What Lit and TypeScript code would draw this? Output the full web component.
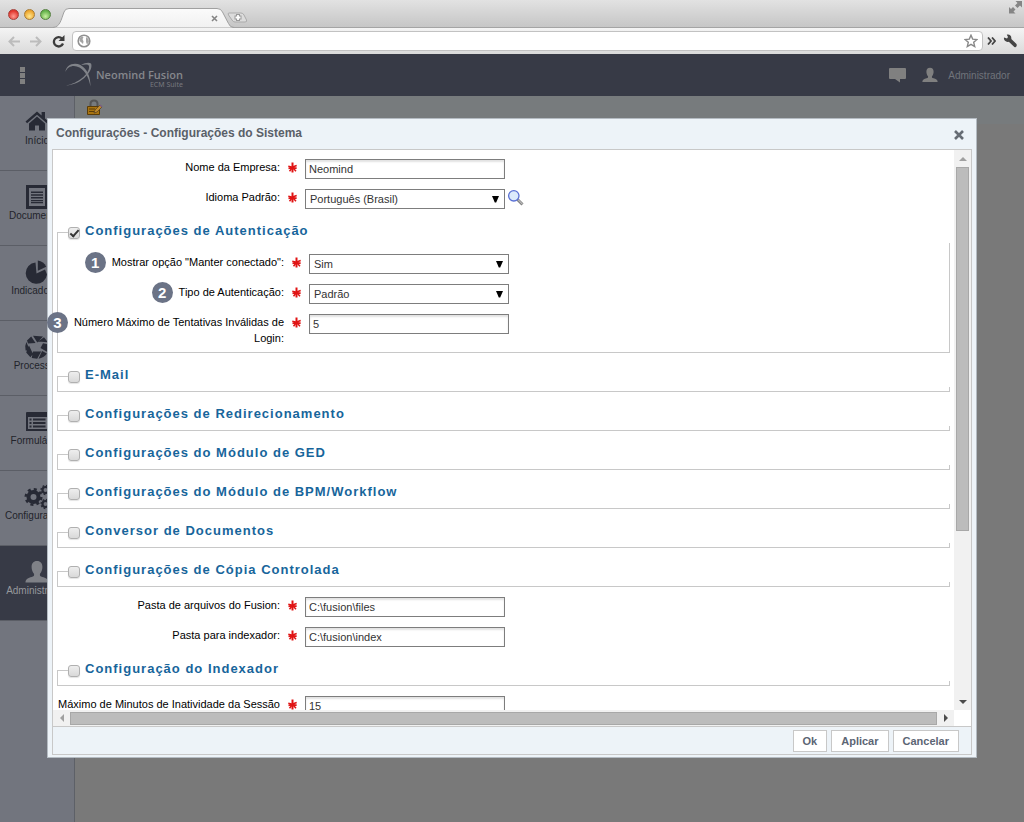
import { LitElement, html, css, svg, nothing } from "lit";
import { customElement, property, state } from "lit/decorators.js";
import { classMap } from "lit/directives/class-map.js";

const house = svg`<path d="M12 1.5 0.5 11.5l1.6 1.8L12 4.8l9.9 8.5 1.6-1.8-3.5-3V2h-3.4v3.5z"/><path d="M12 6.6 4 13.4V20.5h6v-5h4v5h6v-7.1z"/>`;
const documentIcon = svg`<path fill-rule="evenodd" d="M1 0h22v24H1zM4 3v18h16V3z"/><path d="M6 6.5h12v1.4H6zM6 9.3h12v1.4H6zM6 12.1h12v1.4H6zM6 14.9h12v1.4H6zM6 17h12v1.2H6z"/>`;
const pie = svg`<path d="M10.500 2.500A10.700 10.700 0 1 0 22 14.500L20 9.500 11.500 13.500z"/><path d="M12.800 0.500V10.800l8.400-4A10.500 10.500 0 0 0 12.800.5z"/>`;
const aperture = svg`<path d="M8 .8 18 1.6 12.3 7.5zM6.2 1.5 10.5 8 3 8.6 2 5.5zM1.4 7 4.8 15.2.6 15.5A12 12 0 0 1 1.4 7zM4 10.5 8 19l-2.6 3.2L1.2 17.6zM8 16.5h8.2l-4 7.2-5.5-.8zM13.5 23.7l3.6-7.7 4.8 2.6a12 12 0 0 1-8.4 5.1zM15.5 13 18 8.2l5.6 1.4-.8 7.6zM13 6.5l6-4.3 3.8 5z"/>`;
const listIcon = svg`<path fill-rule="evenodd" d="M2 2h21a1 1 0 0 1 1 1v18H1V3a1 1 0 0 1 1-1zM3 7v12h19V7z"/><path d="M4.5 8.5h2v2h-2zM8 8.5h12.5v2H8zM4.5 12h2v2h-2zM8 12h12.5v2H8zM4.5 15.5h2v2h-2zM8 15.5h12.5v2H8z"/>`;
const gears = svg`<circle cx="8.500" cy="12" r="5" fill="none" stroke="currentColor" stroke-width="4"/><circle cx="8.500" cy="12" r="7.700" fill="none" stroke="currentColor" stroke-width="2.600" stroke-dasharray="3 3.050"/><circle cx="20.500" cy="5" r="3" fill="none" stroke="currentColor" stroke-width="2.200"/><circle cx="20.500" cy="5" r="4.400" fill="none" stroke="currentColor" stroke-width="1.500" stroke-dasharray="1.720 1.720"/><circle cx="20.500" cy="19" r="3" fill="none" stroke="currentColor" stroke-width="2.200"/><circle cx="20.500" cy="19" r="4.400" fill="none" stroke="currentColor" stroke-width="1.500" stroke-dasharray="1.720 1.720"/>`;
const person = svg`<path d="M12 1c3.600 0 5.400 2.400 5.400 6 0 2.700-1 5.300-2.400 6.700-.5 2 .3 2.700 2.300 3.300 3.400 1 6.200 1.800 6.200 5.500H.5c0-3.700 2.800-4.500 6.200-5.500 2-.6 2.800-1.300 2.300-3.300C7.600 12.300 6.600 9.700 6.600 7c0-3.600 1.800-6 5.400-6z"/>`;

const MODULES = [
  { label: "Início", icon: house },
  { label: "Documentos", icon: documentIcon },
  { label: "Indicadores", icon: pie },
  { label: "Processos", icon: aperture },
  { label: "Formulários", icon: listIcon },
  { label: "Configurações", icon: gears },
  { label: "Administrador", icon: person, active: true },
];

@customElement("browser-chrome")
class BrowserChrome extends LitElement {
  static styles = css`
    :host { display: block; background: #e4e4e4; }
    .tabs { display: flex; align-items: flex-end; height: 28px; background: linear-gradient(#e2e2e2, #c6c6c6); border-bottom: 1px solid #a4a4a4; box-sizing: border-box; }
    .lights { display: flex; gap: 5px; padding: 0 0 7px 8px; }
    .light { width: 11px; height: 11px; border-radius: 50%; border: 1px solid #8a5a50; box-sizing: border-box; }
    .red { background: radial-gradient(circle at 50% 70%, #ff9a90, #e0352c 70%); border-color: #a5413b; }
    .amber { background: radial-gradient(circle at 50% 70%, #ffe790, #eda52d 70%); border-color: #a67b35; }
    .green { background: radial-gradient(circle at 50% 70%, #c9f0a0, #62b14a 70%); border-color: #55803f; }
    .tab { display: block; width: 200px; height: 20px; margin-bottom: -1px; }
    .expand { margin: 0 2px 13px auto; width: 13px; height: 13px; display: block; }
    .bar { display: flex; align-items: center; height: 26px; padding: 0 7px; background: linear-gradient(#f4f4f4, #dadada); }
    .tool { display: grid; place-items: center; border: 0; padding: 0; background: none; width: 14px; height: 16px; }
    .nav { display: flex; gap: 8px; }
    .address { flex: 1; display: flex; align-items: center; height: 20px; margin-left: 7px; padding: 0 4px; background: #fff; border: 1px solid #c2c2c2; border-radius: 4px; box-sizing: border-box; }
    .url { flex: 1; min-width: 0; border: 0; outline: 0; background: none; font: 12px "Liberation Sans", sans-serif; }
    .end { display: flex; gap: 5px; margin-left: 1px; }
  `;
  render() {
    return html`
      <div class="tabs">
        <div class="lights"><span class="light red"></span><span class="light amber"></span><span class="light green"></span></div>
        <svg class="tab" viewBox="0 0 200 20" aria-hidden="true">
          <defs><linearGradient id="t" x2="0" y2="1"><stop stop-color="#fbfbfb"/><stop offset="1" stop-color="#f1f1f1"/></linearGradient></defs>
          <path d="M2 19.500C9 19 10 12 13 4q1-3.500 5-3.500H166q4 0 5.500 3.500l6 11.500q1.500 4 5.500 4" fill="url(#t)" stroke="#a0a0a0"/>
          <path d="M178 5h12q2 0 3 2l2.500 5q.8 2-1.500 2h-10q-2 0-3-2l-3.500-5q-1-2 .5-2z" fill="#dcdcdc" stroke="#ababab"/>
          <path d="M187 6v7M183.500 9.500h7" stroke="#999" stroke-width="4"/><path d="M187 7v5M184.500 9.500h5" stroke="#fff" stroke-width="1.800"/>
          <path d="m161 8 5 5m0-5-5 5" stroke="#858585" stroke-width="1.600"/>
        </svg>
        <svg class="expand" viewBox="0 0 13 13" aria-hidden="true"><path d="M6.500 0H13v6.500L11 4.500 8.500 7 6 4.500 8.500 2zM0 6l2 2 2-2 2.500 2.500-2 2 2 2H0z" fill="#858585"/></svg>
      </div>
      <div class="bar">
        <div class="nav">
          <button class="tool" aria-label="Voltar"><svg width="12" height="11" viewBox="0 0 12 11"><path d="M12 5.500H2M6 1 1.500 5.500 6 10" fill="none" stroke="#bcbcbc" stroke-width="2"/></svg></button>
          <button class="tool" aria-label="Avançar"><svg width="12" height="11" viewBox="0 0 12 11"><path d="M0 5.500h10M6 1l4.500 4.500L6 10" fill="none" stroke="#bcbcbc" stroke-width="2"/></svg></button>
          <button class="tool" aria-label="Recarregar"><svg width="13" height="13" viewBox="0 0 13 13"><path d="M10 3.500A4.700 4.700 0 1 0 11 8.500" fill="none" stroke="#3c3c3c" stroke-width="2.300"/><path d="M12.500 0v6h-6z" fill="#3c3c3c"/></svg></button>
        </div>
        <div class="address">
          <svg width="14" height="14" viewBox="0 0 14 14" aria-hidden="true"><circle cx="7" cy="7" r="5.800" fill="#fff" stroke="#909090" stroke-width="1.600"/><path d="M2.500 4.500 5 2l1.500 1.500L5.500 5l1 2.500L6 10 4.500 8.500 2.500 7zM9 3l2.500 2L12 8l-2 2.500L9 8z" fill="#a4a4a4"/></svg>
          <input class="url" aria-label="Endereço" />
          <svg width="14" height="14" viewBox="0 0 14 14" aria-hidden="true"><path d="m7 1.200 1.700 3.900 4.300.4-3.300 2.800 1 4.200L7 10.300l-3.700 2.200 1-4.200L1 5.500l4.300-.4z" fill="#fff" stroke="#888" stroke-width="1.400"/></svg>
        </div>
        <div class="end">
          <button class="tool" aria-label="Mais"><svg width="9" height="8" viewBox="0 0 9 8"><path d="m1 .5 3 3.500-3 3.500M5 .5 8 4 5 7.500" fill="none" stroke="#444" stroke-width="1.800"/></svg></button>
          <button class="tool" aria-label="Ferramentas"><svg width="14" height="14" viewBox="0 0 14 14"><path d="M1 3.500 4 4.500 5 3 3.800.8C6.500 0 8.800 2 8.300 5L13.500 10q.8 2-.7 3-1.300.6-2-.4L5.800 7.700C3 8.500.4 6.500 1 3.500z" fill="#444"/></svg></button>
        </div>
      </div>`;
  }
}

@customElement("form-row")
class FormRow extends LitElement {
  @property() label = "";
  @property() value = "";
  @property() kind = "text";
  @property() marker = "";
  @property({ type: Boolean }) lookup = false;
  static styles = css`
    :host { display: grid; grid-template-columns: 223px 200px 20px; column-gap: 25px; margin-top: 10px; align-items: start; font: 11px/16px "Liberation Sans", Arial, sans-serif; color: #000; }
    .label { position: relative; text-align: right; }
    .star { position: absolute; left: calc(100% + 8px); top: 3px; display: block; }
    .anchor { position: relative; }
    .marker { position: absolute; right: 6px; top: -4px; width: 21px; height: 21px; border-radius: 50%; background: #6b7386; color: #fff; font: bold 15px/21px "Liberation Sans", Arial, sans-serif; text-align: center; }
    .field { position: relative; display: flex; }
    .control { width: 100%; height: 20px; margin: 0; box-sizing: border-box; border: 1px solid #7d7d7d; border-radius: 0; background: #fff; color: #333; font: 11px/16px "Liberation Sans", Arial, sans-serif; padding: 0 3px; outline: 0; }
    .text { box-shadow: inset 0 2px 2px #e2e2e2; }
    .select { appearance: none; padding: 0 4px; }
    .arrow { position: absolute; right: 6px; top: 7px; pointer-events: none; }
    .lookup { border: 0; padding: 0; background: none; height: 18px; width: 18px; margin-left: -23px; }
  `;
  render() {
    return html`
      <label class="label" for="control">${this.marker
        ? html`<span class="anchor"><span class="marker">${this.marker}</span></span>`
        : nothing}${this.label}<svg class="star" width="9" height="11" viewBox="0 0 9 11" aria-hidden="true"><path d="M4.500 .5v10" stroke="#e01414" stroke-width="2"/><path d="M.3 4.300 8.700 6.300M8.700 3.500.5 6.500M4.500 5.500 1.500 9.300M4.500 5.500l3.500 3.800" stroke="#e01414" stroke-width="1.500" fill="none"/></svg></label>
      <div class="field">
        ${this.kind === "select"
          ? html`<select id="control" class="control select"><option>${this.value}</option></select>
              <svg class="arrow" width="7" height="7" viewBox="0 0 7 7" aria-hidden="true"><path d="M0 0h7L4.200 6.500H2.800z" fill="#000"/></svg>`
          : html`<input id="control" class="control text" .value=${this.value} />`}
      </div>
      ${this.lookup
        ? html`<button class="lookup" aria-label="Pesquisar"><svg width="18" height="18" viewBox="0 0 18 18"><path d="m10.500 10.500 5 5" stroke="#858585" stroke-width="3"/><path d="m11 10.500 4.300 4.500" stroke="#d0d0d0" stroke-width="1"/><circle cx="6.800" cy="6.800" r="5.200" fill="#dcebfb" stroke="#5a70d4" stroke-width="1.300"/></svg></button>`
        : nothing}`;
  }
}

@customElement("form-group")
class FormGroup extends LitElement {
  @property() heading = "";
  @property({ type: Boolean, reflect: true }) open = false;
  static styles = css`
    :host { display: block; margin-top: 12px; }
    .group { margin: 0; min-width: 0; border: 1px solid #c8c8c8; padding: 0 0 4px; }
    .open { padding: 1px 3px 6px; }
    .legend { position: relative; display: flex; align-items: center; width: calc(100% - 9px); height: 22px; margin: 0 -1px 0 10px; padding: 0; background: #fff; box-sizing: border-box; }
    .wide { width: calc(100% - 3px); margin: 0 -4px 0 7px; }
    .box { appearance: none; flex: none; display: grid; place-items: center; width: 12px; height: 12px; margin: 2px 5px 0 0; border: 1px solid #b0b0b0; border-radius: 3px; background: linear-gradient(#eee, #d9d9d9); box-sizing: border-box; box-shadow: 0 1px 1px #e4e4e4; }
    .box:checked::after { content: ""; width: 7px; height: 3px; border: solid #333; border-width: 0 0 2px 2px; transform: translateY(-1px) rotate(-48deg); }
    .name { font: bold 13px/16px "Liberation Sans", Arial, sans-serif; letter-spacing: 1px; color: #17659b; margin-bottom: 2px; }
  `;
  render() {
    return html`<fieldset class=${classMap({ group: true, open: this.open })}>
      <legend class=${classMap({ legend: true, wide: this.open })}>
        <input id="toggle" class="box" type="checkbox" .checked=${this.open} />
        <label class="name" for="toggle">${this.heading}</label>
      </legend>
      <slot></slot>
    </fieldset>`;
  }
}

@customElement("settings-dialog")
class SettingsDialog extends LitElement {
  static styles = css`
    :host { display: flex; flex-direction: column; min-height: 0; box-sizing: border-box; padding: 0 4px 2px; background: #edf3f8; border: 1px solid #b4bbc2; font: 11px/16px "Liberation Sans", Arial, sans-serif; }
    .head { flex: none; display: flex; align-items: center; justify-content: space-between; height: 30px; padding: 0 6px 0 4px; box-sizing: border-box; }
    .title { margin: 0; padding-bottom: 2px; font: bold 12px/16px "Liberation Sans", Arial, sans-serif; color: #5a6068; }
    .close { display: grid; place-items: center; width: 14px; height: 14px; margin-top: 2px; border: 0; padding: 0; background: none; }
    .frame { flex: 1; min-height: 0; display: grid; grid-template: minmax(0, 1fr) 16px 28px / minmax(0, 1fr) 17px; border: 1px solid #c8c8c8; }
    .content { overflow-x: visible; overflow-y: clip; display: flow-root; min-height: 0; background: #fff; padding: 0 4px; }
    .first { margin-top: 9px; }
    .vbar { display: flex; flex-direction: column; align-items: center; background: #f1f1f1; }
    .hbar { display: flex; align-items: center; background: #f1f1f1; }
    .arrow { flex: none; display: grid; place-items: center; width: 17px; height: 17px; }
    .vthumb { flex: 0 1 364px; width: 13px; box-sizing: border-box; background: #bcbcbc; border: 1px solid #a8a8a8; }
    .hthumb { flex: 1; height: 13px; box-sizing: border-box; background: #bcbcbc; border: 1px solid #a8a8a8; }
    .push { flex: 1; }
    .corner { background: #fff; }
    .foot { grid-column: 1 / -1; display: flex; justify-content: flex-end; align-items: center; gap: 4px; padding-right: 12px; border-top: 1px solid #c8c8c8; }
    .button { height: 22px; padding: 0 9px; box-sizing: border-box; border: 1px solid #c8c8c8; background: #fff; color: #5c6574; font: bold 11px/16px "Liberation Sans", Arial, sans-serif; }
  `;
  render() {
    return html`
      <header class="head">
        <h1 class="title">Configurações - Configurações do Sistema</h1>
        <button class="close" aria-label="Fechar"><svg width="10" height="10" viewBox="0 0 10 10"><path d="m1 1 8 8m0-8-8 8" stroke="#666c74" stroke-width="2.600"/></svg></button>
      </header>
      <div class="frame">
        <div class="content">
          <form-row class="first" label="Nome da Empresa:" value="Neomind"></form-row>
          <form-row label="Idioma Padrão:" kind="select" value="Português (Brasil)" lookup></form-row>
          <form-group heading="Configurações de Autenticação" open>
            <form-row marker="1" label='Mostrar opção "Manter conectado":' kind="select" value="Sim"></form-row>
            <form-row marker="2" label="Tipo de Autenticação:" kind="select" value="Padrão"></form-row>
            <form-row marker="3" label="Número Máximo de Tentativas Inválidas de Login:" value="5"></form-row>
          </form-group>
          <form-group heading="E-Mail"></form-group>
          <form-group heading="Configurações de Redirecionamento"></form-group>
          <form-group heading="Configurações do Módulo de GED"></form-group>
          <form-group heading="Configurações do Módulo de BPM/Workflow"></form-group>
          <form-group heading="Conversor de Documentos"></form-group>
          <form-group heading="Configurações de Cópia Controlada"></form-group>
          <form-row label="Pasta de arquivos do Fusion:" value="C:\\fusion\\files"></form-row>
          <form-row label="Pasta para indexador:" value="C:\\fusion\\index"></form-row>
          <form-group heading="Configuração do Indexador"></form-group>
          <form-row label="Máximo de Minutos de Inatividade da Sessão" value="15"></form-row>
        </div>
        <div class="vbar">
          <span class="arrow"><svg width="8" height="4"><path d="M0 4 4 0l4 4z" fill="#a0a0a0"/></svg></span>
          <span class="vthumb"></span><span class="push"></span>
          <span class="arrow"><svg width="8" height="4"><path d="M0 0h8L4 4z" fill="#4c4c4c"/></svg></span>
        </div>
        <div class="hbar">
          <span class="arrow"><svg width="4" height="8"><path d="M4 0v8L0 4z" fill="#a0a0a0"/></svg></span>
          <span class="hthumb"></span>
          <span class="arrow"><svg width="4" height="8"><path d="M0 0v8l4-4z" fill="#4c4c4c"/></svg></span>
        </div>
        <div class="corner"></div>
        <footer class="foot">
          <button class="button">Ok</button><button class="button">Aplicar</button><button class="button">Cancelar</button>
        </footer>
      </div>`;
  }
}

@customElement("app-root")
class AppRoot extends LitElement {
  @state() private modules = MODULES;
  static styles = css`
    :host { display: flex; flex-direction: column; height: 100vh; overflow: hidden; font: 10px/14px "Liberation Sans", Arial, sans-serif; }
    .app { position: relative; flex: 1; min-height: 0; display: flex; flex-direction: column; background: #797979; }
    .top { flex: none; display: flex; align-items: center; height: 42px; padding: 0 14px 0 20px; background: #373a46; color: #808389; }
    .menu { display: block; border: 0; padding: 0; background: none; width: 6px; height: 17px; }
    .logo { display: block; margin-left: 39px; }
    .brand { display: flex; flex-direction: column; align-items: flex-end; margin: 7px 0 0 3px; }
    .name { font: 600 11px/12px "Open Sans", sans-serif; color: #85878c; }
    .suite { font: 7px/8px "Noto Sans", sans-serif; color: #77797f; }
    .user { display: flex; align-items: center; margin-left: auto; color: #808080; }
    .bubble { margin-right: 16px; }
    .who { margin-left: 10px; padding-top: 1px; font-size: 10px; color: #70747b; }
    .body { flex: 1; display: flex; min-height: 0; }
    .side { width: 74px; flex: none; background: #72757e; border-right: 1px solid #5d6067; }
    .module { display: flex; flex-direction: column; align-items: center; height: 75px; box-sizing: border-box; padding-top: 14px; border-bottom: 1px solid #5b5e66; color: #272a35; text-decoration: none; white-space: nowrap; }
    .module svg { fill: currentColor; overflow: visible; }
    .label { width: 64px; text-align: center; color: #22242b; }
    .active { background: #373a46; color: #7f8187; }
    .active .label { color: #96989c; }
    .strip { flex: 1; height: 28px; padding: 3px 0 0 12px; box-sizing: border-box; background: #777b7d; }
    .overlay { position: absolute; inset: 0; display: grid; grid-template: minmax(0, 1fr) / minmax(0, 1fr); padding: 64px 47px; }
  `;
  render() {
    return html`
      <browser-chrome></browser-chrome>
      <div class="app">
        <header class="top">
          <button class="menu" aria-label="Menu"><svg width="6" height="17"><path d="M0 0h5v5H0zM0 6h5v5H0zM0 12h5v5H0z" fill="#808080"/></svg></button>
          <svg class="logo" width="28" height="26" viewBox="0 0 28 26" aria-hidden="true"><path d="M.5 10C.5 3 9-.5 15.500 3c7 4 10 12 10 21.500C24 16 20.500 9 14.500 5.500 9 2.500 2.500 4 .5 10z" fill="#808389"/><path d="M16 3c4-2.500 8.500-3 10-1.500C29 8 17 23 .8 23.500 14 21 25 11 24 4c-.8-2-4-1.500-8-1z" fill="#808389"/></svg>
          <div class="brand"><span class="name">Neomind Fusion</span><span class="suite">ECM Suite</span></div>
          <div class="user">
            <svg class="bubble" width="17" height="15" viewBox="0 0 17 15" fill="#808080" aria-hidden="true"><path d="M1 0h15a1 1 0 0 1 1 1v9a1 1 0 0 1-1 1h-5v3.500L6 11H1a1 1 0 0 1-1-1V1a1 1 0 0 1 1-1z"/></svg>
            <svg width="16" height="16" viewBox="0 0 24 24" fill="#808080" aria-hidden="true">${person}</svg>
            <span class="who">Administrador</span>
          </div>
        </header>
        <div class="body">
          <nav class="side">
            ${this.modules.map((m) => html`<a href="#" class=${classMap({ module: true, active: !!m.active })}>
              <svg width="24" height="24" viewBox="0 0 24 24" aria-hidden="true">${m.icon}</svg>
              <span class="label">${m.label}</span></a>`)}
          </nav>
          <div class="strip">
            <svg width="16" height="17" viewBox="0 0 16 17" aria-hidden="true"><path d="M3.500 8V5q0-3.500 3.500-3.500T10.500 5v3" fill="none" stroke="#555" stroke-width="2"/><path d="M.5 7.500h12v8H.5z" fill="#a87410" stroke="#5a3c08"/><path d="M2 10h6M2 12.500h5" stroke="#5a3c08"/><path d="m7 14 1-3 5-5 2 2-5 5z" fill="#c08a2a" stroke="#5a4326" stroke-width=".800"/><path d="m12.500 6.500 1-1 2 2-1 1z" fill="#7a5b80"/></svg>
          </div>
        </div>
        <div class="overlay"><settings-dialog></settings-dialog></div>
      </div>`;
  }
}
